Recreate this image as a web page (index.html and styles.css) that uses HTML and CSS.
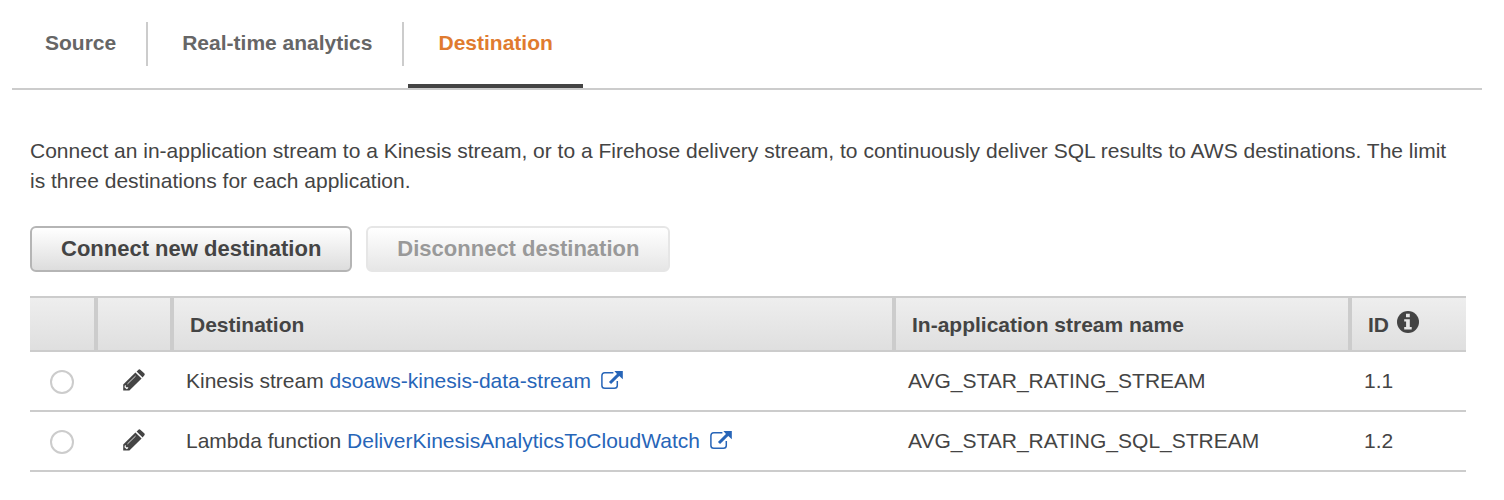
FILE: index.html
```
<!DOCTYPE html>
<html lang="en">
<head>
<meta charset="utf-8">
<title>Destination</title>
<link rel="stylesheet" href="styles.css">
</head>
<body>
<svg class="sprite" aria-hidden="true">
  <symbol id="pencil" viewBox="0 0 22 22">
    <path fill="currentColor" d="M0.2 21.5V15.6L12.4 3.6L18.6 9.6L6.4 21.5ZM13.6 2.5L15.2 0.9Q16.4 -0.2 17.6 0.9L21.2 4.3Q22.3 5.5 21.2 6.6L19.6 8.4Z"/>
    <path fill="#fff" d="M1.6 16.7L2.8 16V18.3H5.4L4.8 19.6L3.8 20.2L1.6 18.5Z"/>
    <path stroke="#fff" stroke-width="0.8" fill="none" d="M4.4 15L12.6 7"/>
  </symbol>
  <symbol id="external" viewBox="0 0 22 20">
    <path fill="none" stroke="currentColor" stroke-width="1.5" d="M12.4 2.8H3.8Q0.9 2.8 0.9 5.7V15.4Q0.9 18.2 3.8 18.2H13.4Q16.3 18.2 16.3 15.4V11"/>
    <path fill="none" stroke="currentColor" stroke-width="3" d="M9 13L18.5 3.6"/>
    <path fill="currentColor" d="M13.4 1H21.8V9.2L19.4 7L15.6 3.4Z"/>
  </symbol>
  <symbol id="info" viewBox="0 0 22 22">
    <circle cx="11" cy="11" r="11" fill="currentColor"/>
    <path fill="#e8e8e8" d="M9 2.8H12.8V6.2H9ZM7.2 8.2H12.8V16H14.7V18.4H7.2V16H9.1V10.6H7.2Z"/>
  </symbol>
</svg>

<nav class="tabs" aria-label="Application steps">
  <ul class="tab-list">
    <li><a class="tab" href="#source">Source</a></li>
    <li><a class="tab" href="#analytics">Real-time analytics</a></li>
    <li><a class="tab tab-active" href="#destination" aria-current="page">Destination</a></li>
  </ul>
</nav>

<main class="content">
  <p class="intro">Connect an in-application stream to a Kinesis stream, or to a Firehose delivery stream, to continuously deliver SQL results to AWS destinations. The limit is three destinations for each application.</p>

  <div class="actions">
    <button class="button" type="button">Connect new destination</button>
    <button class="button" type="button" disabled>Disconnect destination</button>
  </div>

  <table class="grid">
    <colgroup>
      <col class="col-select">
      <col class="col-edit">
      <col>
      <col class="col-stream">
      <col class="col-id">
    </colgroup>
    <thead>
      <tr>
        <th scope="col" aria-label="Select"></th>
        <th scope="col" aria-label="Edit"></th>
        <th scope="col">Destination</th>
        <th scope="col">In-application stream name</th>
        <th scope="col"><span class="with-icon">ID <svg class="info" role="img" aria-label="About ID"><use href="#info"/></svg></span></th>
      </tr>
    </thead>
    <tbody>
      <tr>
        <td class="select"><input class="radio" type="radio" name="destination" aria-label="Select dsoaws-kinesis-data-stream"></td>
        <td class="edit"><button class="icon-button" type="button" aria-label="Edit dsoaws-kinesis-data-stream"><svg class="pencil"><use href="#pencil"/></svg></button></td>
        <td>Kinesis stream <a class="link" href="#stream">dsoaws-kinesis-data-stream<svg class="external"><use href="#external"/></svg></a></td>
        <td>AVG_STAR_RATING_STREAM</td>
        <td>1.1</td>
      </tr>
      <tr>
        <td class="select"><input class="radio" type="radio" name="destination" aria-label="Select DeliverKinesisAnalyticsToCloudWatch"></td>
        <td class="edit"><button class="icon-button" type="button" aria-label="Edit DeliverKinesisAnalyticsToCloudWatch"><svg class="pencil"><use href="#pencil"/></svg></button></td>
        <td>Lambda function <a class="link" href="#function">DeliverKinesisAnalyticsToCloudWatch<svg class="external"><use href="#external"/></svg></a></td>
        <td>AVG_STAR_RATING_SQL_STREAM</td>
        <td>1.2</td>
      </tr>
    </tbody>
  </table>
</main>
</body>
</html>
```
FILE: styles.css
```
* { box-sizing: border-box; }

body {
  margin: 0;
  background: #fff;
  color: #444;
  font-family: "Helvetica Neue", "Liberation Sans", Arial, sans-serif;
  font-size: 21px;
  line-height: 30px;
}

.sprite {
  position: absolute;
  width: 0;
  height: 0;
}

.tabs {
  margin: 0 22px 0 12px;
  padding: 22px 3px 0;
  border-bottom: 2px solid #ccc;
}

.tab-list {
  display: flex;
  gap: 4px;
  height: 66px;
  margin: 0;
  padding: 0;
  list-style: none;
}

.tab {
  display: block;
  padding: 0 30px 2px;
  border-right: 2px solid #ccc;
  color: #666;
  font-weight: bold;
  line-height: 42px;
  text-decoration: none;
}

.tab-active {
  padding-bottom: 20px;
  border-right: 0;
  border-bottom: 4px solid #444;
  color: #e07b2f;
}

.content { padding: 46px 38px 28px 30px; }

.intro { margin: 0; }

.actions {
  display: flex;
  gap: 14px;
  margin: 30px 0 24px;
}

.button {
  padding: 6px 29px;
  border: 2px solid #b5b5b5;
  border-radius: 6px;
  background: linear-gradient(#fff, #ddd);
  color: #444;
  font: bold 22px/30px "Helvetica Neue", "Liberation Sans", Arial, sans-serif;
}

.button:disabled {
  border-color: #e6e6e6;
  background: linear-gradient(#fff, #e6e6e6);
  color: #999;
}

.grid {
  width: 100%;
  border-collapse: separate;
  border-spacing: 0;
  table-layout: fixed;
}

.col-select { width: 64px; }
.col-edit { width: 76px; }
.col-stream { width: 456px; }
.col-id { width: 118px; }

.grid th {
  height: 56px;
  padding: 2px 16px 0;
  border: solid #ccc;
  border-width: 2px 0 2px 4px;
  background: linear-gradient(#eee, #dfdfdf) padding-box;
  text-align: left;
}

.grid th:first-child { border-left: 0; }

.grid td {
  height: 60px;
  padding: 0 16px;
  border-bottom: 2px solid #ccc;
}

.grid .select { padding: 0; }

.grid .edit { padding: 0 0 2px 4px; }

.radio {
  display: block;
  width: 24px;
  height: 24px;
  margin: 2px auto 0;
  border: 2px solid #ccc;
  border-radius: 50%;
  background: #fff;
  appearance: none;
}

.radio:checked { background: #444 content-box; padding: 4px; }

.icon-button {
  display: block;
  margin: 0 auto;
  padding: 0;
  border: 0;
  background: none;
  color: #444;
}

.pencil {
  display: block;
  width: 22px;
  height: 22px;
}

.with-icon {
  display: flex;
  gap: 8px;
}

.info {
  width: 22px;
  height: 22px;
  margin-top: 1px;
}

.link {
  color: #2765b8;
  text-decoration: none;
}

.external {
  width: 22px;
  height: 20px;
  margin-left: 10px;
  vertical-align: -2px;
}
```
